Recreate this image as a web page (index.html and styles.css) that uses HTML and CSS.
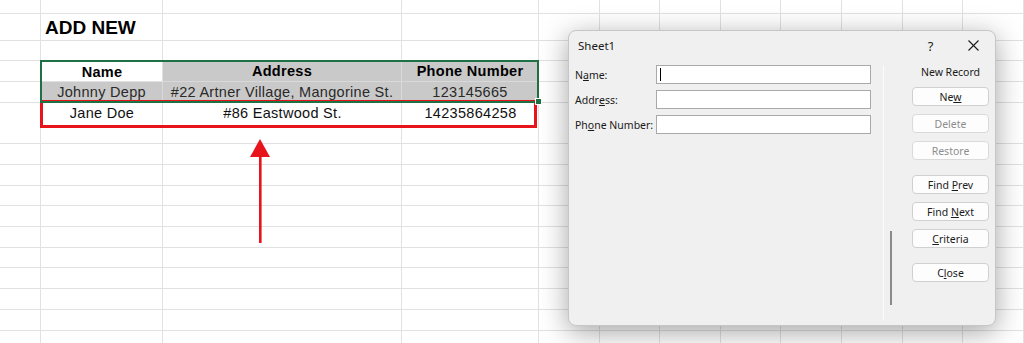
FILE: index.html
```html
<!DOCTYPE html>
<html lang="en">
<head>
    <meta charset="UTF-8">
    <meta name="viewport" content="width=device-width, initial-scale=1.0">
    <title>Add New Record - Data Form</title>
    <link rel="stylesheet" href="styles.css">
</head>
<body>
    <div class="sheet">
        <div class="sheet-title">ADD NEW</div>

        <!-- Table -->
        <div class="data-table">
            <div class="cell head">Name</div>
            <div class="cell head selected">Address</div>
            <div class="cell head selected">Phone Number</div>

            <div class="cell selected">Johnny Depp</div>
            <div class="cell selected">#22 Artner Village, Mangorine St.</div>
            <div class="cell selected">123145665</div>

            <div class="cell">Jane Doe</div>
            <div class="cell">#86 Eastwood St.</div>
            <div class="cell">14235864258</div>
        </div>

        <!-- Selection + annotation -->
        <div class="selection"><span class="fill-handle"></span></div>
        <div class="highlight"></div>

        <svg class="arrow" width="24" height="106" viewBox="0 0 24 106">
            <polygon points="12,1 2,19 22,19" fill="#e8141c"/>
            <rect x="11" y="17" width="2.6" height="88" fill="#e8141c"/>
        </svg>
    </div>

    <!-- Data form dialog -->
    <div class="dialog">
        <div class="dialog-titlebar">
            <span class="dialog-title">Sheet1</span>
            <span class="title-btn">?</span>
            <span class="title-btn">
                <svg width="11" height="11" viewBox="0 0 11 11">
                    <path d="M0.5 0.5 L10.5 10.5 M10.5 0.5 L0.5 10.5" stroke="#1a1a1a" stroke-width="1.1" fill="none"/>
                </svg>
            </span>
        </div>

        <div class="dialog-body">
            <div class="form-fields">
                <label class="field-label">N<u>a</u>me:</label>
                <div class="field"><span class="caret"></span></div>
                <label class="field-label">Addr<u>e</u>ss:</label>
                <div class="field"></div>
                <label class="field-label">Ph<u>o</u>ne Number:</label>
                <div class="field"></div>
            </div>

            <div class="divider"></div>
            <div class="scroll-track"><div class="scroll-thumb"></div></div>

            <div class="actions">
                <div class="record-status">New Record</div>
                <button class="form-btn">Ne<u>w</u></button>
                <button class="form-btn" disabled>Delete</button>
                <button class="form-btn" disabled>Restore</button>
                <button class="form-btn spaced">Find <u>P</u>rev</button>
                <button class="form-btn">Find <u>N</u>ext</button>
                <button class="form-btn"><u>C</u>riteria</button>
                <button class="form-btn spaced">C<u>l</u>ose</button>
            </div>
        </div>
    </div>
</body>
</html>
```

FILE: styles.css
```css
/* Excel sheet + Data Form */

body {
    margin: 0;
    width: 1024px;
    height: 343px;
    overflow: hidden;
    position: relative;
    font-family: "Liberation Sans", Arial, sans-serif;
}

/* Sheet background with gridlines */
.sheet {
    position: relative;
    height: 343px;
    display: grid;
    grid-template-columns: 41px 122px 239px 137px 1fr;
    grid-template-rows: 14px 26px 21px 21px 20px 21px 1fr;
    background:
        linear-gradient(#e1e1e1, #e1e1e1) 0 13px / 100% 1px no-repeat,
        repeating-linear-gradient(to bottom, transparent 0 19.7px, #e1e1e1 19.7px 20.7px) 0 20.3px / 100% 340px no-repeat,
        linear-gradient(to right, transparent 40px, #e1e1e1 40px 41px, transparent 41px 162px, #e1e1e1 162px 163px, transparent 163px 401px, #e1e1e1 401px 402px, transparent 402px 538px, #e1e1e1 538px 539px, transparent 539px),
        repeating-linear-gradient(to right, transparent 0 59.6px, #e1e1e1 59.6px 60.6px) 539px 0 / 485px 100% no-repeat,
        #fff;
}

.sheet-title {
    grid-column: 2 / 4;
    grid-row: 2;
    display: flex;
    align-items: flex-end;
    padding: 0 0 1px 4px;
    font-size: 19px;
    font-weight: bold;
    color: #000;
}

.data-table {
    grid-column: 2 / 5;
    grid-row: 4 / 7;
    display: grid;
    grid-template-columns: 122px 239px 137px;
    grid-template-rows: 21px 20px 21px;
}

.cell {
    display: flex;
    align-items: center;
    justify-content: center;
    font-size: 14.5px;
    letter-spacing: 0.3px;
    color: #111;
    white-space: nowrap;
}

.cell.head {
    font-weight: bold;
    color: #000;
}

.cell.selected {
    background: #c9c9c9;
    border-right: 1px solid #d9d9d9;
    border-bottom: 1px solid #d9d9d9;
    color: #2a2a2a;
}

.cell.head.selected {
    color: #000;
}

.selection {
    grid-column: 2 / 5;
    grid-row: 4 / 6;
    margin: -1px 0 -1px -1px;
    border: 2px solid #1f7145;
    position: relative;
}

.fill-handle {
    position: absolute;
    right: -5px;
    bottom: -4px;
    width: 5px;
    height: 5px;
    background: #1f7145;
    border: 1px solid #fff;
}

.highlight {
    grid-column: 2 / 5;
    grid-row: 6;
    margin: -2px 2px -5px -1px;
    border: 3px solid #e8141c;
}

.arrow {
    position: absolute;
    left: 248px;
    top: 138px;
}

/* Data form dialog */
.dialog {
    position: absolute;
    left: 568px;
    top: 30px;
    width: 428px;
    height: 296px;
    box-sizing: border-box;
    background: #f0f0f0;
    border: 1px solid #c6c6c6;
    border-radius: 8px;
    box-shadow: 0 6px 28px rgba(0, 0, 0, 0.36);
    font-family: "Noto Sans", "Open Sans", sans-serif;
    color: #1a1a1a;
    display: flex;
    flex-direction: column;
}

.dialog-titlebar {
    height: 29px;
    display: flex;
    align-items: center;
}

.dialog-title {
    flex: 1;
    padding-left: 9px;
    font-size: 11.5px;
}

.title-btn {
    width: 43px;
    height: 29px;
    display: flex;
    align-items: center;
    justify-content: center;
    font-size: 13px;
}

.dialog-body {
    flex: 1;
    display: flex;
}

.form-fields {
    width: 314px;
    box-sizing: border-box;
    padding: 5px 0 0 6px;
    display: grid;
    grid-template-columns: 81px 215px;
    grid-auto-rows: 19px;
    row-gap: 6px;
    align-content: start;
}

.field-label {
    display: flex;
    align-items: center;
    font-size: 10.5px;
    white-space: nowrap;
}

.field {
    background: #fff;
    border: 1px solid #a9a9a9;
    box-sizing: border-box;
    padding: 2px 3px;
}

.caret {
    display: block;
    width: 1px;
    height: 13px;
    background: #000;
}

.divider {
    width: 1px;
    background: #fbfbfb;
    margin: 6px 0 5px;
}

.scroll-track {
    width: 28px;
    box-sizing: border-box;
    padding-left: 6px;
}

.scroll-thumb {
    width: 2px;
    height: 74px;
    margin-top: 171px;
    background: #8a8a8a;
}

.actions {
    width: 77px;
    padding-top: 6px;
    display: flex;
    flex-direction: column;
    gap: 8px;
}

.record-status {
    height: 13px;
    line-height: 13px;
    text-align: center;
    font-size: 10.5px;
}

.form-btn {
    height: 19px;
    padding: 0;
    background: #fdfdfd;
    border: 1px solid #d0d0d0;
    border-radius: 4px;
    font-family: inherit;
    font-size: 10.5px;
    color: #1b1b1b;
}

.form-btn:disabled {
    color: #8d8d8d;
    border-color: #dadada;
}

.form-btn.spaced {
    margin-top: 7px;
}
```
